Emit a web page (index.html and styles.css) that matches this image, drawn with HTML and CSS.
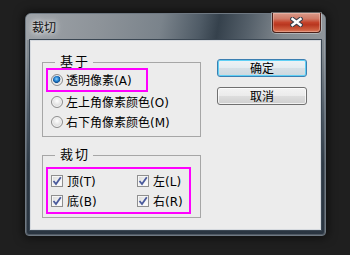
FILE: index.html
```html
<!DOCTYPE html>
<html lang="zh-CN">
<head>
<meta charset="utf-8">
<title>裁切</title>
<link rel="stylesheet" href="styles.css">
</head>
<body>
<div class="window">
  <div class="titlebar">
    <span class="title">裁切</span>
    <button class="close" type="button" aria-label="关闭">
      <svg width="13" height="10" viewBox="0 0 13 10">
        <path d="M2.5 2 L10.5 8 M10.5 2 L2.5 8" stroke="#3b3f4a" stroke-width="4.6" stroke-linecap="square" fill="none"/>
        <path d="M2.5 2 L10.5 8 M10.5 2 L2.5 8" stroke="#ffffff" stroke-width="2.4" stroke-linecap="square" fill="none"/>
      </svg>
    </button>
  </div>
  <div class="client">
    <div class="left">
      <div class="group group-base">
        <span class="group-title">基于</span>
        <label class="row hl-radio"><span class="radio checked"></span><span class="txt">透明像素<span class="lat">(A)</span></span></label>
        <label class="row row-plain"><span class="radio"></span><span class="txt">左上角像素颜色<span class="lat">(O)</span></span></label>
        <label class="row row-plain"><span class="radio"></span><span class="txt">右下角像素颜色<span class="lat">(M)</span></span></label>
      </div>
      <div class="group group-crop">
        <span class="group-title">裁切</span>
        <div class="hl-checks">
          <label class="row"><span class="check"><svg width="10" height="10" viewBox="0 0 10 10"><path d="M1.5 5 L4 8 L8.8 1.2" stroke="#4a5a9c" stroke-width="1.8" fill="none"/></svg></span><span class="txt">顶<span class="lat">(T)</span></span></label>
          <label class="row"><span class="check"><svg width="10" height="10" viewBox="0 0 10 10"><path d="M1.5 5 L4 8 L8.8 1.2" stroke="#4a5a9c" stroke-width="1.8" fill="none"/></svg></span><span class="txt">左<span class="lat">(L)</span></span></label>
          <label class="row"><span class="check"><svg width="10" height="10" viewBox="0 0 10 10"><path d="M1.5 5 L4 8 L8.8 1.2" stroke="#4a5a9c" stroke-width="1.8" fill="none"/></svg></span><span class="txt">底<span class="lat">(B)</span></span></label>
          <label class="row"><span class="check"><svg width="10" height="10" viewBox="0 0 10 10"><path d="M1.5 5 L4 8 L8.8 1.2" stroke="#4a5a9c" stroke-width="1.8" fill="none"/></svg></span><span class="txt">右<span class="lat">(R)</span></span></label>
        </div>
      </div>
    </div>
    <div class="buttons">
      <button class="btn btn-default" type="button">确定</button>
      <button class="btn" type="button">取消</button>
    </div>
  </div>
</div>
</body>
</html>
```
FILE: styles.css
```css
html, body {
  margin: 0;
  padding: 0;
}
body {
  width: 350px;
  height: 255px;
  overflow: hidden;
  background: #1f1f1f;
  box-sizing: border-box;
  padding: 13px 0 0 25px;
  font-family: "DejaVu Sans", "Noto Sans CJK SC", sans-serif;
  font-size: 12px;
  color: #000;
}
.window {
  box-sizing: border-box;
  width: 301px;
  height: 223px;
  border: 1px solid #6f7983;
  border-radius: 6px 6px 4px 4px;
  background: linear-gradient(to bottom, #8e959b 0px, #7f878e 40px, #4d5965 100px, #2f3b47 150px, #2a3541 100%);
  box-shadow: 0 0 10px 2px rgba(0,0,0,0.55), inset 0 0 0 1px rgba(255,255,255,0.18);
  padding: 0 4px 5px 4px;
  display: flex;
  flex-direction: column;
}
.titlebar {
  height: 26px;
  flex: none;
  display: flex;
  align-items: flex-start;
  margin: 0 -4px;
  padding: 0 4px 0 6px;
  border-radius: 5px 5px 0 0;
  background: linear-gradient(100deg, #9ea3a8 0%, #8d9399 25%, #7a838b 45%, #4f5b66 58%, #35414c 64%, #55606a 74%, #838a90 86%, #8f959a 100%);
}
.title {
  font-family: "Noto Sans CJK SC", sans-serif;
  font-size: 12px;
  line-height: 14px;
  margin-top: 6px;
  color: #111;
  text-shadow: 0 0 5px rgba(255,255,255,0.9), 0 0 9px rgba(255,255,255,0.7);
}
.close {
  margin-left: auto;
  margin-top: -1px;
  width: 49px;
  height: 20px;
  padding: 0 0 2px 0;
  border: 1px solid #4a2019;
  border-top: none;
  border-radius: 0 0 4px 4px;
  background: linear-gradient(to bottom, #d99a8a 0%, #cf7a66 30%, #c4422a 50%, #b8361f 62%, #cc5a3c 85%, #d97a5c 100%);
  box-shadow: 0 0 0 1px rgba(255,255,255,0.35), inset 0 0 0 1px rgba(255,220,210,0.35);
  display: flex;
  align-items: center;
  justify-content: center;
}
.close svg {
  display: block;
}
.client {
  flex: 1;
  box-sizing: border-box;
  background: #ececec;
  border: 1px solid #d6dadf;
  box-shadow: 0 0 0 1px #3b4753;
  padding: 18px 0 0 11px;
  display: flex;
  align-items: flex-start;
  gap: 16px;
}
.left {
  width: 159px;
  display: flex;
  flex-direction: column;
}
.group {
  position: relative;
  box-sizing: border-box;
  border: 1px solid #a6a6a6;
  padding-left: 3px;
}
.group-base {
  margin-top: 3px;
  height: 75px;
  padding-top: 5px;
}
.group-crop {
  margin-top: 18px;
  height: 63px;
  padding-top: 11px;
}
.group-title {
  position: absolute;
  left: 12px;
  top: -9px;
  padding: 0 3px 0 5px;
  background: #ececec;
  font-family: "Noto Sans CJK SC", sans-serif;
  font-size: 13px;
  line-height: 14px;
  letter-spacing: 2px;
}
.row {
  display: flex;
  align-items: center;
  height: 20px;
  white-space: nowrap;
}
.txt {
  font-family: "Noto Sans CJK SC", sans-serif;
  font-size: 12px;
  line-height: 14px;
}
.lat {
  font-family: "DejaVu Sans", sans-serif;
  font-size: 12px;
}
.hl-radio {
  box-sizing: border-box;
  width: 102px;
  height: 24px;
  border: 2px solid #ff00ff;
  padding-left: 3px;
}
.row-plain {
  padding-left: 5px;
}
.radio {
  flex: none;
  box-sizing: border-box;
  width: 12px;
  height: 12px;
  margin-right: 3px;
  border-radius: 50%;
  border: 1px solid #8e8e8e;
  background: radial-gradient(circle at 50% 40%, #ffffff 0%, #e6e6e6 45%, #cfcfcf 100%);
  box-shadow: inset 0 0 0 1px #f4f4f4;
}
.radio.checked {
  background:
    radial-gradient(circle at 45% 40%, #8fd2ff 0px, #2a8ad6 2px, #0b4f94 3.6px, transparent 4.2px),
    radial-gradient(circle at 50% 40%, #ffffff 0%, #e6e6e6 45%, #cfcfcf 100%);
}
.hl-checks {
  box-sizing: border-box;
  width: 145px;
  height: 47px;
  border: 2px solid #ff00ff;
  padding: 2px 0 1px 3px;
  display: grid;
  grid-template-columns: 86px 1fr;
  grid-auto-rows: 20px;
}
.check {
  flex: none;
  box-sizing: border-box;
  width: 12px;
  height: 12px;
  margin-right: 4px;
  border: 1px solid #8f8f8f;
  background: linear-gradient(135deg, #d8d8d8 0%, #f4f4f4 60%, #ffffff 100%);
  box-shadow: inset 0 0 0 1px #f6f6f6;
  display: flex;
  align-items: center;
  justify-content: center;
}
.check svg {
  display: block;
}
.buttons {
  display: flex;
  flex-direction: column;
  gap: 10px;
}
.btn {
  box-sizing: border-box;
  width: 90px;
  height: 18px;
  padding: 0;
  border: 1px solid #707070;
  border-radius: 3px;
  background: linear-gradient(to bottom, #f3f3f3 0%, #ebebeb 48%, #dddddd 52%, #cfcfcf 100%);
  box-shadow: inset 0 0 0 1px rgba(255,255,255,0.7);
  font-family: "Noto Sans CJK SC", sans-serif;
  font-size: 12px;
  line-height: 14px;
  color: #000;
  display: flex;
  align-items: center;
  justify-content: center;
}
.btn-default {
  border-color: #3c7fb1;
  background: linear-gradient(to bottom, #eaf6fd 0%, #d9f0fc 48%, #bee6fd 52%, #a7d9f5 100%);
  background: linear-gradient(to bottom, #eef3f6 0%, #e4ecf0 48%, #d6e0e6 52%, #cdd8de 100%);
  box-shadow: inset 0 0 0 1px #5fd0f5;
}
```
